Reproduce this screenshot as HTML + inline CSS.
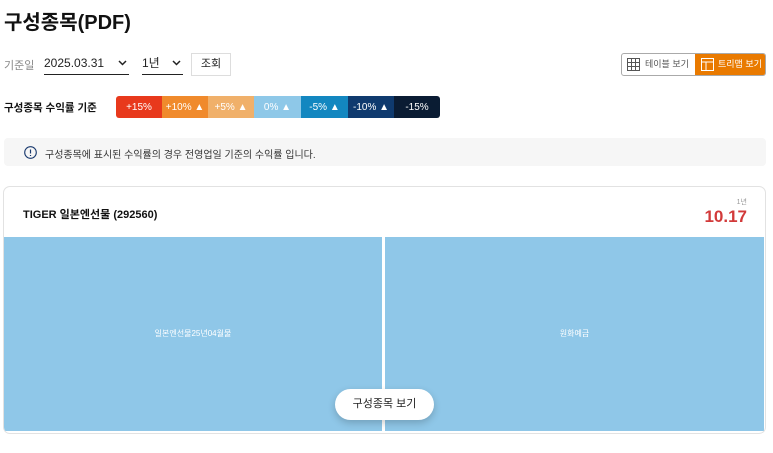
<!DOCTYPE html>
<html><head><meta charset="utf-8"><style>
*{box-sizing:border-box;margin:0;padding:0}
body{width:773px;height:453px;background:#fff;font-family:"Liberation Sans","Noto Sans CJK KR",sans-serif;color:#222;position:relative;overflow:hidden}
.a{position:absolute}
h1{position:absolute;left:4px;top:6px;font-size:20px;font-weight:bold;color:#111}
.sel{position:absolute;top:52px;height:23px;border-bottom:1.5px solid #222;font-size:12px;line-height:23px}
.sel svg{position:absolute;right:2px;top:8px}
.leg{position:absolute;top:96px;height:22px;color:#fff;font-size:10px;line-height:23px;text-align:center}
</style></head><body>
<h1>구성종목(PDF)</h1>
<div class="a" style="left:4px;top:57px;font-size:11px;color:#888">기준일</div>
<div class="sel" style="left:44px;width:85px">2025.03.31<svg width="9" height="6" viewBox="0 0 9 6"><path d="M1 1l3.5 3.5L8 1" stroke="#222" stroke-width="1.5" fill="none"/></svg></div>
<div class="sel" style="left:142px;width:41px">1년<svg width="9" height="6" viewBox="0 0 9 6"><path d="M1 1l3.5 3.5L8 1" stroke="#222" stroke-width="1.5" fill="none"/></svg></div>
<div class="a" style="left:191px;top:53px;width:40px;height:23px;border:1px solid #ddd;font-size:11px;line-height:21px;text-align:center">조회</div>
<div class="a" style="left:621px;top:53px;width:145px;height:23px;border:1px solid #aaa;border-radius:3px;overflow:hidden;font-size:9px">
<div class="a" style="left:0;top:0;width:73px;height:21px;color:#555;line-height:21px"><svg class="a" style="left:5px;top:4px" width="13" height="13" viewBox="0 0 13 13"><rect x=".5" y=".5" width="12" height="12" fill="none" stroke="#555"/><path d="M4.5 0v13M8.5 0v13M0 4.5h13M0 8.5h13" stroke="#555"/></svg><span class="a" style="left:23px">테이블 보기</span></div>
<div class="a" style="left:73px;top:0;width:72px;height:21px;background:#e97a00;color:#fff;line-height:21px"><svg class="a" style="left:6px;top:4px" width="13" height="13" viewBox="0 0 13 13"><rect x=".5" y=".5" width="12" height="12" fill="none" stroke="#fff"/><path d="M0 4h13M5 4v9" stroke="#fff"/></svg><span class="a" style="left:23px">트리맵 보기</span></div>
</div>
<div class="a" style="left:4px;top:100px;font-size:10.5px;font-weight:bold;color:#111">구성종목 수익률 기준</div>
<div class="leg" style="left:116px;width:46px;background:#e8391c;border-radius:3px 0 0 3px">+15%</div>
<div class="leg" style="left:162px;width:46px;background:#f08a2c">+10% ▲</div>
<div class="leg" style="left:208px;width:46px;background:#f0b06a">+5% ▲</div>
<div class="leg" style="left:254px;width:47px;background:#8ec8e8">0% ▲</div>
<div class="leg" style="left:301px;width:47px;background:#1387c0">-5% ▲</div>
<div class="leg" style="left:348px;width:46px;background:#0f3a6e">-10% ▲</div>
<div class="leg" style="left:394px;width:46px;background:#0a1c33;border-radius:0 3px 3px 0">-15%</div>
<div class="a" style="left:4px;top:138px;width:762px;height:28px;background:#f6f6f6;border-radius:4px"></div>
<svg class="a" style="left:24px;top:146px" width="13" height="13" viewBox="0 0 13 13"><circle cx="6.5" cy="6.5" r="5.8" fill="none" stroke="#1a3a6e" stroke-width="1.1"/><path d="M6.5 3.5v4M6.5 9v1" stroke="#1a3a6e" stroke-width="1.2"/></svg>
<div class="a" style="left:45px;top:146px;font-size:10px;color:#333">구성종목에 표시된 수익률의 경우 전영업일 기준의 수익률 입니다.</div>
<div class="a" style="left:3px;top:186px;width:763px;height:248px;border:1px solid #e2e2e2;border-radius:7px;overflow:hidden">
<div class="a" style="left:19px;top:19px;font-size:11px;font-weight:bold;color:#111">TIGER 일본엔선물 (292560)</div>
<div class="a" style="right:18px;top:10px;font-size:7px;color:#999">1년</div>
<div class="a" style="right:18px;top:20px;font-size:17px;font-weight:bold;color:#d23a3a">10.17</div>
<div class="a" style="left:0;top:50px;width:378px;height:194px;background:#8fc7e8;color:#fff;font-size:8px;text-align:center;line-height:194px">일본엔선물25년04월물</div>
<div class="a" style="left:381px;top:50px;width:379px;height:194px;background:#8fc7e8;color:#fff;font-size:8px;text-align:center;line-height:194px">원화예금</div>
</div>
<div class="a" style="left:335px;top:389px;width:99px;height:31px;background:#fff;border-radius:16px;box-shadow:0 3px 8px rgba(0,0,0,.2);font-size:11px;line-height:31px;text-align:center;color:#222">구성종목 보기</div>
</body></html>
